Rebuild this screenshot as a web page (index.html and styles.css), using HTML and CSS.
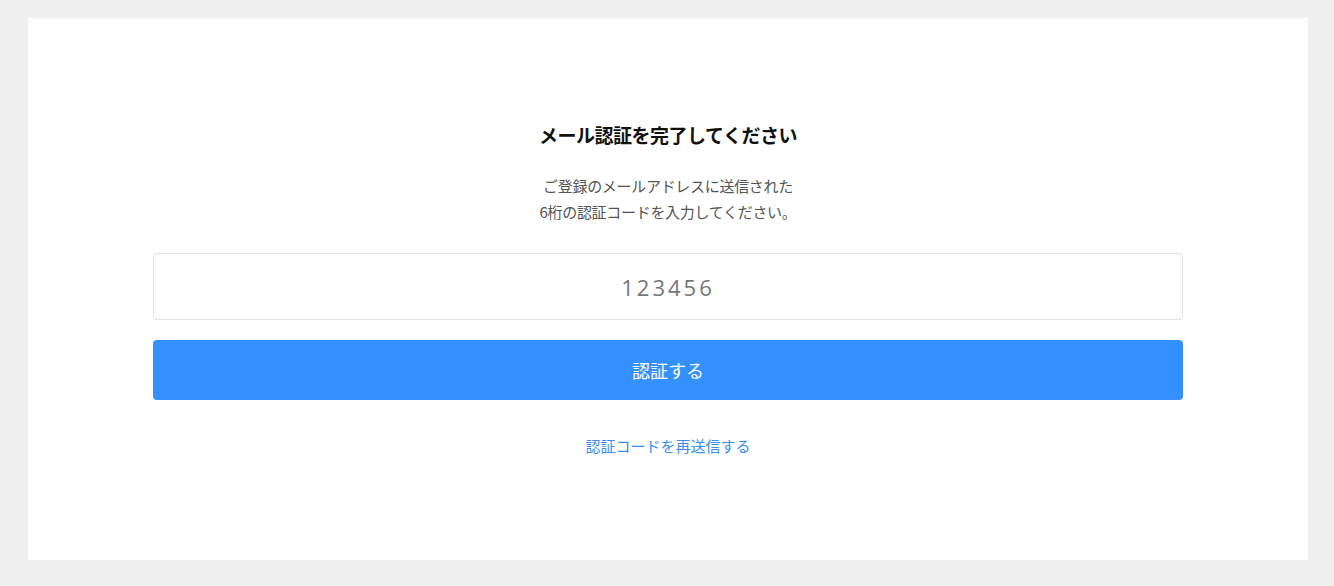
FILE: index.html
```html
<!DOCTYPE html>
<html lang="ja">
<head>
<meta charset="utf-8">
<title>メール認証</title>
<link rel="stylesheet" href="styles.css">
</head>
<body>
<main class="card">
  <div class="content">
    <h1 class="title">メール認証を完了してください</h1>
    <p class="desc">ご登録のメールアドレスに送信された<br>6桁の認証コードを入力してください。</p>
    <input class="code-input" type="text" placeholder="123456" maxlength="6">
    <button class="submit" type="button">認証する</button>
    <a class="resend" href="#">認証コードを再送信する</a>
  </div>
</main>
</body>
</html>
```
FILE: styles.css
```css
* { box-sizing: border-box; }
html, body { margin: 0; padding: 0; }
body {
  background: #f0f0f0;
  font-family: "Noto Sans CJK JP", "Noto Sans", sans-serif;
  height: 586px;
  padding: 18px 26px 26px 28px;
}
.card {
  background: #ffffff;
  height: 542px;
  padding: 102px 0 0;
}
.content {
  width: 1030px;
  margin: 0 auto;
  display: flex;
  flex-direction: column;
  align-items: stretch;
  text-align: center;
}
.title {
  margin: 0;
  font-size: 19px;
  line-height: 30px;
  letter-spacing: -0.5px;
  font-weight: 700;
  color: #111;
}
.desc {
  margin: 23px 0 0;
  font-size: 15px;
  line-height: 26px;
  letter-spacing: -0.3px;
  color: #555;
}
.code-input {
  margin-top: 28px;
  height: 67px;
  border: 1px solid #e2e2e2;
  border-radius: 4px;
  text-align: center;
  font-family: "Open Sans", "Noto Sans", sans-serif;
  font-size: 22px;
  letter-spacing: 3px;
  color: #333;
  outline: none;
}
.code-input::placeholder { color: #777; }
.submit {
  margin-top: 20px;
  height: 60px;
  border: none;
  border-radius: 4px;
  background: #3490ff;
  color: #fff;
  font-family: "Noto Sans CJK JP", "Noto Sans", sans-serif;
  font-size: 18px;
  line-height: 24px;
  padding-bottom: 2px;
  cursor: pointer;
}
.resend {
  margin-top: 34px;
  align-self: center;
  font-size: 15px;
  line-height: 24px;
  color: #3a8ef0;
  text-decoration: none;
}
```
